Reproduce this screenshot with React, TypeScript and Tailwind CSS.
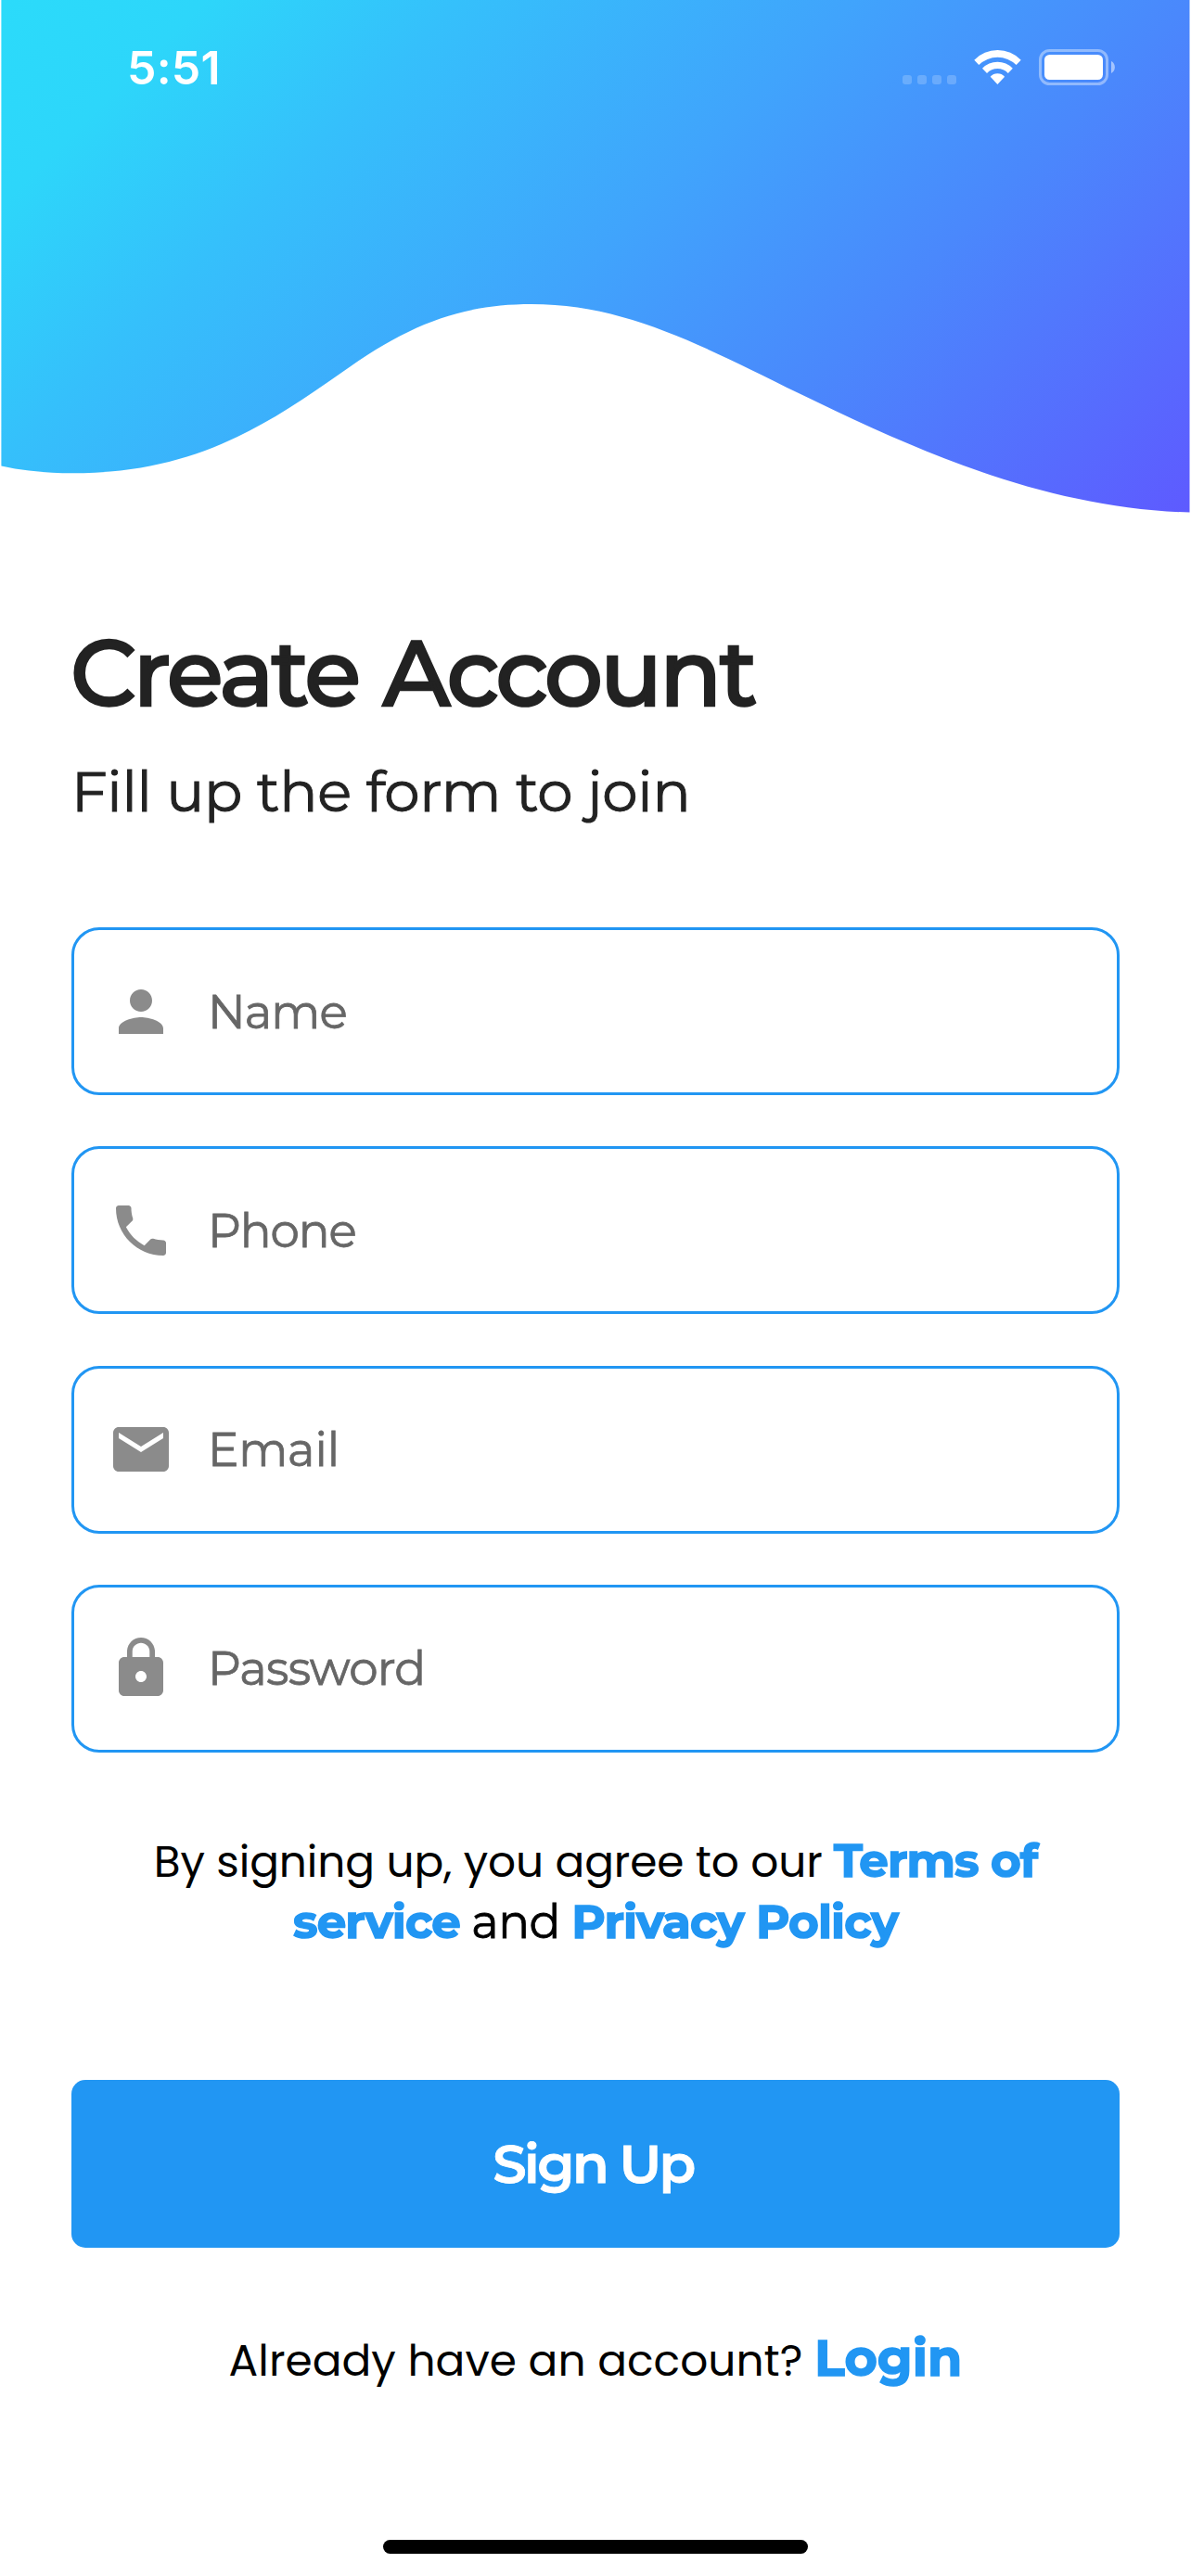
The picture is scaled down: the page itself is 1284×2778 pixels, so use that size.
import type { ReactNode } from "react";
import { MdPerson, MdPhone, MdEmail, MdLock } from "react-icons/md";

function Wave() {
  return (
    <svg className="absolute inset-0" width="1284" height="560" viewBox="0 0 1284 560" aria-hidden="true">
      <defs>
        <linearGradient id="sky" gradientUnits="userSpaceOnUse" x1="0" y1="0" x2="918" y2="918">
          <stop offset="0" stopColor="#2bdbfa" />
          <stop offset="0.12" stopColor="#2dd6fa" />
          <stop offset="0.27" stopColor="#35c0fb" />
          <stop offset="0.5" stopColor="#40a4fc" />
          <stop offset="0.7" stopColor="#4a88fc" />
          <stop offset="1" stopColor="#5e5aff" />
        </linearGradient>
      </defs>
      <path
        fill="url(#sky)"
        d="M1.4 0V502.5C26 508 52 510.3 78 510.3C205 510.3 280 464 368 402C440 350 497 328 573 328C674 328 755 372 861 424C1000 492 1132 548 1282.5 552.6V0Z"
      />
    </svg>
  );
}

function StatusBar() {
  return (
    <div className="relative flex h-[146px] items-start justify-between pl-[137px] pr-[82px] text-white">
      <span className="mt-[43px] font-['Inter',sans-serif] text-[50px] leading-[60px] font-semibold tracking-[0.2px]">
        5:51
      </span>
      <div className="mt-[53px] flex items-start">
        <div className="mt-[28px] flex gap-[6px]">
          <i className="size-[10px] rounded-[3px] bg-white/20" />
          <i className="size-[10px] rounded-[3px] bg-white/20" />
          <i className="size-[10px] rounded-[3px] bg-white/20" />
          <i className="size-[10px] rounded-[3px] bg-white/20" />
        </div>
        <svg className="ml-[19px]" width="51" height="39" viewBox="0 0 51 39" fill="#fff" aria-hidden="true">
          <path d="M.3 11.7A35 35 0 0 1 50.7 11.7L45.6 17A28.7 28.7 0 0 0 5.3 17Z" />
          <path d="M9 20.7A22.7 22.7 0 0 1 41.8 20.7L36.8 26A15.5 15.5 0 0 0 14 26Z" />
          <path d="M17.7 29.7A10.4 10.4 0 0 1 33.1 29.7L25.4 38Z" />
        </svg>
        <svg className="ml-[19px]" width="82" height="39" viewBox="0 0 82 39" aria-hidden="true">
          <rect x="1.5" y="1.5" width="72" height="36" rx="10" fill="none" stroke="#fff" strokeOpacity="0.4" strokeWidth="3" />
          <rect x="6" y="6" width="63" height="27" rx="5.5" fill="#fff" />
          <path d="M78 13C83.200 15.300 83.200 23.700 78 26Z" fill="#fff" fillOpacity="0.5" />
        </svg>
      </div>
    </div>
  );
}

function Field({ icon, label, tracking }: { icon: ReactNode; label: string; tracking: string }) {
  return (
    <div className="flex h-[181px] items-center gap-[36px] rounded-[30px] border-3 border-[#2196f3] pl-[36px] text-[72px] text-[#8b8b8b]">
      {icon}
      <span
        className={`pt-[2px] text-[50px] leading-[60px] text-[#666666] [-webkit-text-stroke:0.8px_#666666] ${tracking}`}
      >
        {label}
      </span>
    </div>
  );
}

function Strong({ children }: { children: ReactNode }) {
  return (
    <span className="font-['Montserrat','Inter',sans-serif] text-[50px] leading-none font-bold tracking-[-0.9px] text-[#2196f3] [-webkit-text-stroke:1.5px_#2196f3]">
      {children}
    </span>
  );
}

export default function App() {
  return (
    <main className="flex h-[2778px] w-[1284px] flex-col overflow-hidden bg-white font-['Montserrat','Inter',sans-serif]">
      <header className="relative h-[560px] shrink-0">
        <Wave />
        <StatusBar />
      </header>

      <section className="flex flex-col px-[77px] pt-[106px]">
        <h1 className="-ml-px text-[99px] leading-[120px] font-medium tracking-[-3px] whitespace-nowrap text-[#222222] [word-spacing:3px] [-webkit-text-stroke:2.6px_#222222]">
          Create Account
        </h1>
        <p className="mt-[27px] text-[61px] leading-[80px] tracking-[-0.3px] text-[#222222] [-webkit-text-stroke:1px_#222222]">
          Fill up the form to join
        </p>

        <div className="mt-[107px] flex flex-col gap-[55.3px]">
          <Field icon={<MdPerson />} label="Name" tracking="tracking-[-0.9px]" />
          <Field icon={<MdPhone />} label="Phone" tracking="tracking-[-1.1px]" />
          <Field icon={<MdEmail />} label="Email" tracking="tracking-[-0.2px]" />
          <Field icon={<MdLock />} label="Password" tracking="tracking-[-0.8px]" />
        </div>

        <p className="mt-[85px] text-center font-['Poppins','Inter',sans-serif] text-[47px] leading-[66px] tracking-[-0.1px] whitespace-nowrap text-black">
          By signing up, you agree to our <Strong>Terms of</Strong>
          <br />
          <Strong>service</Strong>{" "}
          <span className="font-['Montserrat','Inter',sans-serif] text-[50px] leading-none tracking-[-0.6px] [-webkit-text-stroke:0.8px_#000]">
            and{" "}
          </span>
          <Strong>Privacy Policy</Strong>
        </p>

        <button className="mt-[136.5px] h-[181px] rounded-[15px] bg-[#2196f3] pr-[5px] text-[58px] font-semibold tracking-[-2.6px] text-white [-webkit-text-stroke:0.8px_#fff]">
          Sign Up
        </button>

        <p className="mt-[81.5px] text-center font-['Poppins','Inter',sans-serif] text-[47px] leading-[80px] tracking-[0.05px] whitespace-nowrap text-black">
          Already have an account?{" "}
          <span className="font-['Montserrat','Inter',sans-serif] text-[54px] leading-none font-bold text-[#2196f3] [-webkit-text-stroke:1.5px_#2196f3]">
            Login
          </span>
        </p>
      </section>

      <div className="mt-auto mb-[24px] ml-[413px] h-[15px] w-[458px] shrink-0 rounded-full bg-black" />
    </main>
  );
}
